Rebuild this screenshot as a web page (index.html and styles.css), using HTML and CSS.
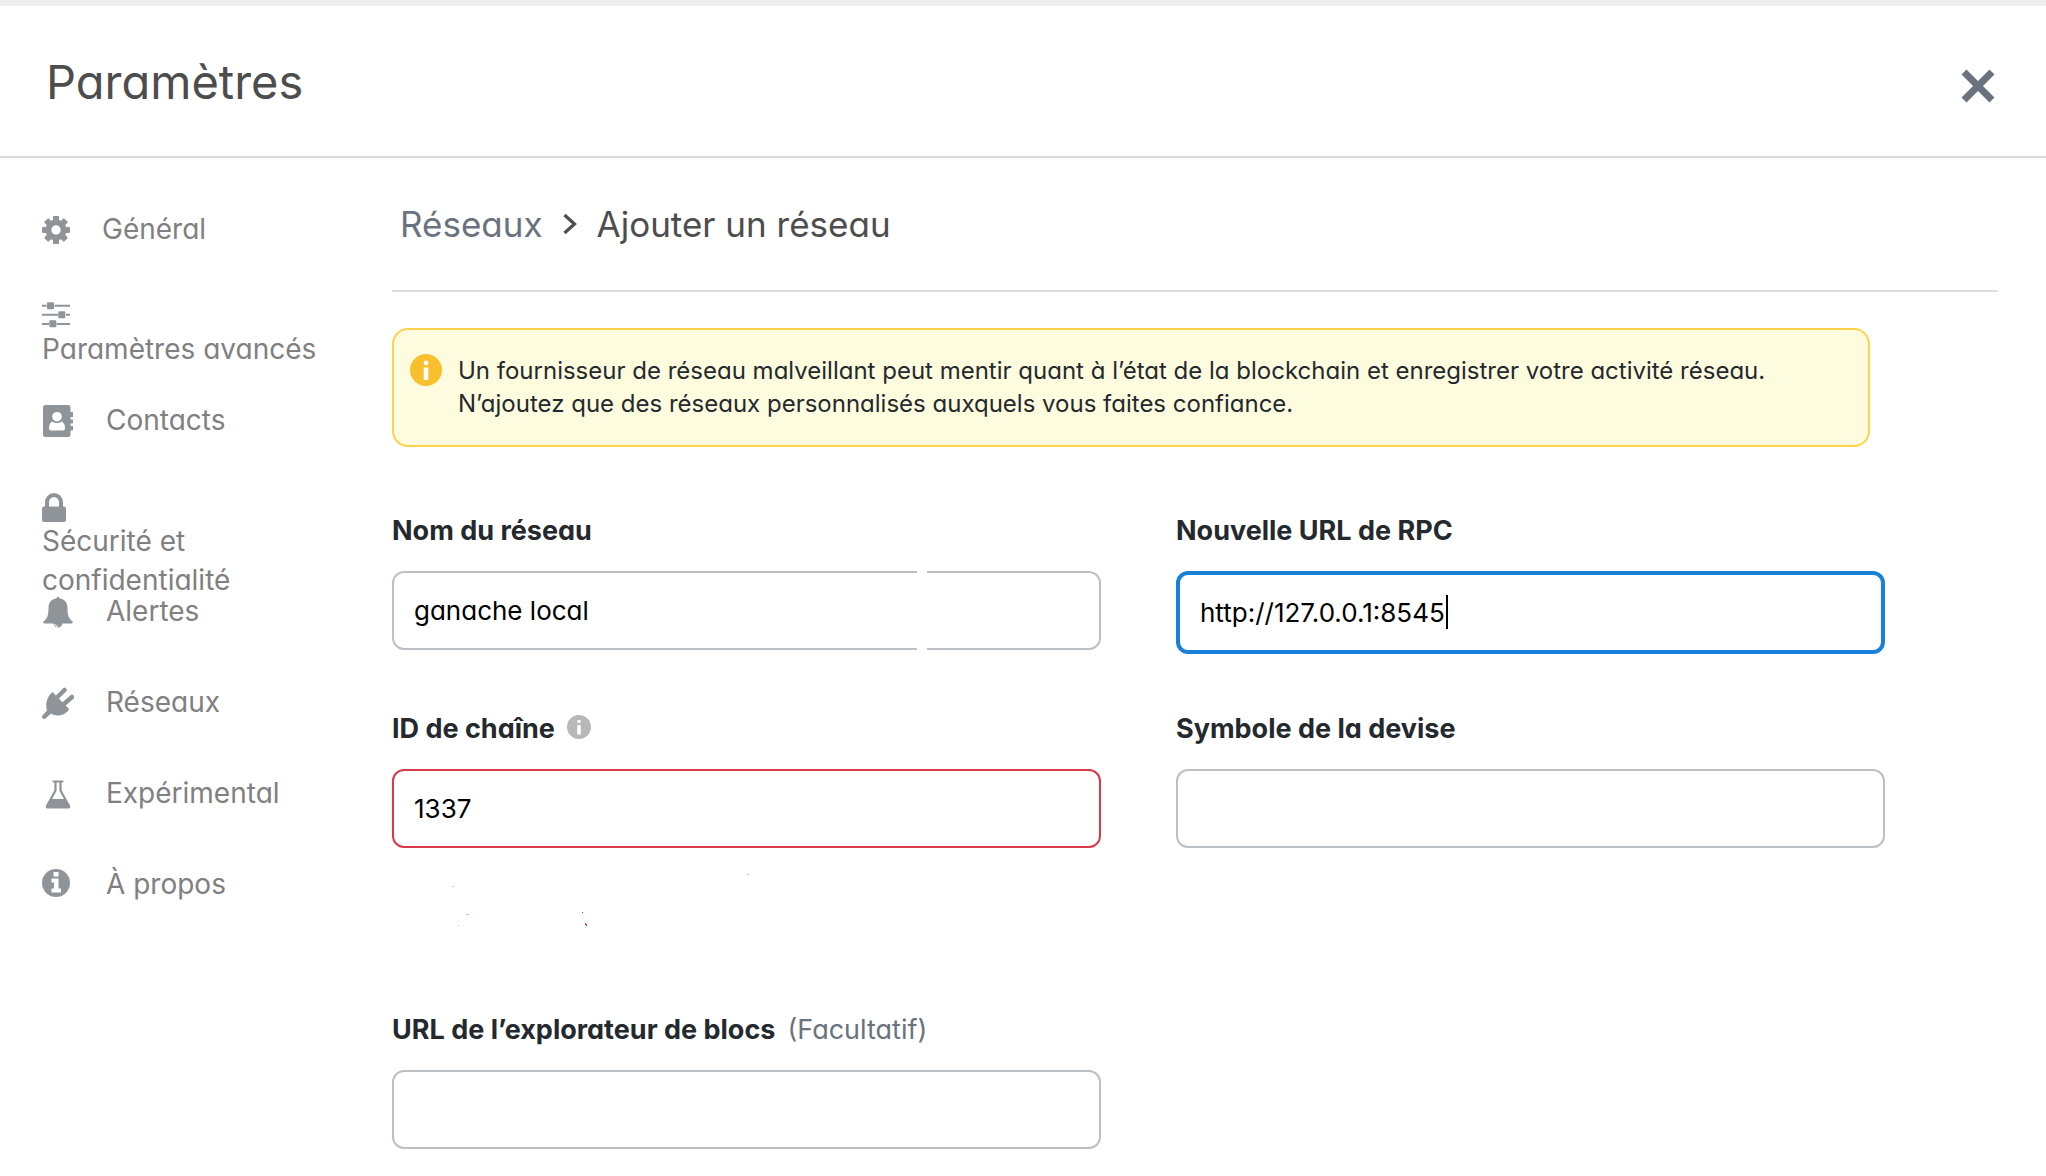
FILE: index.html
```html
<!DOCTYPE html>
<html lang="fr">
<head>
<meta charset="utf-8">
<meta name="viewport" content="width=device-width, initial-scale=1">
<title>Paramètres</title>
<link rel="stylesheet" href="styles.css">
</head>
<body>
<header class="header">
  <h1 class="header-title">Paramètres</h1>
  <button class="close" type="button" aria-label="Fermer">
    <svg width="34" height="34" viewBox="0 0 34 34"><path d="M5.500 5.500 28.500 28.500M28.500 5.500 5.500 28.500" stroke="currentColor" stroke-width="7" stroke-linecap="square" fill="none"/></svg>
  </button>
</header>
<div class="layout">
  <nav class="tabs">
    <a class="tab" href="#general">
      <svg class="icon" width="28" height="28" viewBox="0 0 28 28"><g fill="currentColor"><rect x="11" y="0" width="6" height="28" rx="1"/><rect x="0" y="11" width="28" height="6" rx="1"/><rect x="11" y="0" width="6" height="28" rx="1" transform="rotate(45 14 14)"/><rect x="11" y="0" width="6" height="28" rx="1" transform="rotate(-45 14 14)"/><circle cx="14" cy="14" r="10.500"/></g><circle cx="14" cy="14" r="4.700" fill="#fff"/></svg>
      <span>Général</span>
    </a>
    <a class="tab tab-stacked" href="#avance">
      <svg class="icon" width="28" height="28" viewBox="0 0 28 28" fill="currentColor"><path d="M0 2.700h4.500v2H0zM12.500 2.700H28v2H12.500zM0 11.700h16v2H0zM24 11.700h4v2h-4zM0 20.900h7v2H0zM14.500 20.900H28v2H14.500z"/><rect x="5" y="0.200" width="7" height="7" rx="1"/><rect x="16.300" y="9.200" width="7" height="7" rx="1"/><rect x="7.300" y="18.300" width="7" height="7" rx="1"/></svg>
      <span>Paramètres avancés</span>
    </a>
    <a class="tab" href="#contacts">
      <svg class="icon" width="32" height="32" viewBox="0 0 32 32"><path fill="currentColor" d="M3.500 0H26q2.500 0 2.500 2.500V7H31v5h-2.500v2.500H31v4h-2.500V21H31v4.500h-2.500v4Q28.500 32 26 32H3.500Q1 32 1 29.500v-27Q1 0 3.500 0z"/><g fill="#fff"><circle cx="15" cy="11.700" r="4.800"/><path d="M10 16.500q5 3 10 0 3 2 3 6.500 0 2.500-2 2.500H9q-2 0-2-2.500 0-4.500 3-6.500z"/></g></svg>
      <span>Contacts</span>
    </a>
    <a class="tab tab-stacked" href="#securite">
      <svg class="icon" width="28" height="29" viewBox="0 0 28 29"><rect x="0" y="13.500" width="24" height="15.500" rx="2" fill="currentColor"/><path d="M5 15V9.500a7 7.500 0 0 1 14 0V15" fill="none" stroke="currentColor" stroke-width="4"/></svg>
      <span>Sécurité et confidentialité</span>
    </a>
    <a class="tab" href="#alertes">
      <svg class="icon" width="32" height="32" viewBox="0 0 32 32"><path fill="currentColor" d="M14.500 2.500q0-1.700 1.500-1.700t1.500 1.700C23 3 25.500 7 25.500 12c0 8 1.500 10.500 5 13.500.7 1.200 0 2-1 2H20.500Q19.500 31.500 16 31.500T11.500 27.500H2.500c-1 0-1.700-.8-1-2 3.500-3 5-5.500 5-13.500 0-5 2.500-9 8-9.500z"/><path d="M13 28q.4 2.500 3 2.500" stroke="#fff" stroke-width="1" fill="none"/></svg>
      <span>Alertes</span>
    </a>
    <a class="tab" href="#reseaux">
      <svg class="icon" width="32" height="32" viewBox="0 0 32 32"><path fill="currentColor" d="M10.500 5 27 22 26 24C21 29.500 13 29.500 9 26.500L3.500 31.500Q0 33 0 29L5 23.500C3 18 5 10 9.500 6z"/><path d="M15.500 10 22.500 3M22 17 30 10" stroke="currentColor" stroke-width="4.500" stroke-linecap="round"/></svg>
      <span>Réseaux</span>
    </a>
    <a class="tab" href="#experimental">
      <svg class="icon" width="32" height="32" viewBox="0 0 32 32"><path d="M11.500 3.500h9M13.500 3.500v9L5 28q-.6 1.500 1 1.500h20q1.600 0 1-1.500l-8.500-15.500v-9" fill="none" stroke="currentColor" stroke-width="2.200" stroke-linecap="round"/><path d="M9 21h14l5 7.500q0 1-1 1H5q-1 0-1-1z" fill="currentColor"/></svg>
      <span>Expérimental</span>
    </a>
    <a class="tab" href="#apropos">
      <svg class="icon" width="32" height="32" viewBox="0 0 32 32"><circle cx="14" cy="14" r="14" fill="currentColor"/><path d="M11.500 3h5v4.500h-5zM9.500 9.500h7v10H19v4H9.500v-4h2.500v-6H9.500z" fill="#fff"/></svg>
      <span>À propos</span>
    </a>
  </nav>
  <main class="content">
    <nav class="crumbs">
      <a class="crumb-link" href="#reseaux">Réseaux</a>
      <svg width="14" height="22" viewBox="0 0 14 22"><path d="M1.500 2 11.500 11 1.500 20" fill="none" stroke="currentColor" stroke-width="3.200"/></svg>
      <h2 class="crumb-current">Ajouter un réseau</h2>
    </nav>
    <form class="form">
      <div class="alert" role="note">
        <svg width="32" height="32" viewBox="0 0 32 32"><circle cx="16" cy="16" r="16" fill="#f8c02c"/><circle cx="16" cy="9" r="2.400" fill="#fff"/><path d="M13.700 13.500h4.600V26h-4.600z" fill="#fff"/></svg>
        <p class="alert-text">Un fournisseur de réseau malveillant peut mentir quant à l’état de la blockchain et enregistrer votre activité réseau. N’ajoutez que des réseaux personnalisés auxquels vous faites confiance.</p>
      </div>
      <div class="fields">
        <div class="field">
          <div class="label-row"><label for="name">Nom du réseau</label></div>
          <div class="control split"><input class="input" id="name" type="text" value="ganache local"></div>
        </div>
        <div class="field">
          <div class="label-row"><label for="rpc">Nouvelle URL de RPC</label></div>
          <div class="control"><input class="input input-active" id="rpc" type="text" value="http://127.0.0.1:8545"><span class="caret"></span></div>
        </div>
        <div class="field">
          <div class="label-row">
            <label for="chain">ID de chaîne</label>
            <svg class="hint" width="24" height="24" viewBox="0 0 24 24"><circle cx="12" cy="12" r="12" fill="#b8b8b8"/><circle cx="12" cy="6.500" r="1.800" fill="#fff"/><path d="M10.200 10h3.600v9.500h-3.600z" fill="#fff"/></svg>
          </div>
          <div class="control"><input class="input input-error" id="chain" type="text" value="1337"></div>
          <svg class="message" viewBox="0 0 709 107"><g fill="#d73847"><path d="M190 64h1v1h-1zM193 75h1v1h1v2h-1v-1h-1z"/><g opacity=".4"><path d="M60 38h2v1h-2zM355 26h2v1h-2zM74 66h3v1h-3zM66 77h1v1h-1z"/></g></g></svg>
        </div>
        <div class="field">
          <div class="label-row"><label for="symbol">Symbole de la devise</label></div>
          <div class="control"><input class="input" id="symbol" type="text"></div>
        </div>
        <div class="field">
          <div class="label-row"><label for="explorer">URL de l’explorateur de blocs</label><span class="optional">(Facultatif)</span></div>
          <div class="control"><input class="input" id="explorer" type="text"></div>
        </div>
      </div>
    </form>
  </main>
</div>
</body>
</html>
```
FILE: styles.css
```css
* { box-sizing: border-box; }

body {
  margin: 0;
  border-top: 6px solid #ebedef;
  background: #fff;
  color: #24292e;
  font-family: Inter, "Liberation Sans", sans-serif;
  font-feature-settings: "cv11";
  overflow: hidden;
}

h1, h2, p { margin: 0; font-weight: 400; }
a { text-decoration: none; }
svg { display: block; flex: none; }

.header {
  display: flex;
  align-items: center;
  justify-content: space-between;
  height: 152px;
  padding: 2px 51px 0 46px;
  border-bottom: 2px solid #d8d8d8;
}
.header-title { font-size: 47px; line-height: 60px; color: #4d4d4d; }
.close {
  padding: 8px 0 0;
  border: 0;
  background: none;
  color: #6a737d;
}

.layout { display: grid; grid-template-columns: 392px 1fr; }

.tabs { padding: 26px 60px 0 42px; }
.tab {
  display: flex;
  align-items: center;
  gap: 32px;
  height: 91px;
  color: #808080;
  font-size: 28px;
  line-height: 39px;
}
.tab-stacked { display: block; height: 100px; padding-top: 27px; }
.icon { color: #8f9498; }

.content { padding-right: 48px; }
.crumbs {
  display: flex;
  align-items: center;
  gap: 20px;
  height: 134px;
  padding: 0 8px;
  border-bottom: 2px solid #dedede;
  color: #4d4d4d;
  font-size: 35px;
  line-height: 44px;
}
.crumb-link { color: #6a737d; }
.crumb-current { font-size: 35px; }

.form { max-width: 1493px; padding-top: 36px; }
.alert {
  display: flex;
  gap: 16px;
  margin-right: 15px;
  padding: 24px 16px;
  border: 2px solid #ffd14d;
  border-radius: 16px;
  background: #fefcde;
}
.alert-text {
  max-width: 1340px;
  padding-bottom: 1px;
  font-size: 24px;
  line-height: 33px;
}

.fields {
  display: grid;
  grid-template-columns: 1fr 1fr;
  gap: 55px 75px;
  padding-top: 64px;
}
.label-row {
  display: flex;
  align-items: center;
  gap: 12px;
  height: 40px;
  margin-bottom: 20px;
  font-size: 27px;
  line-height: 40px;
}
.label-row label { font-weight: 700; }
.hint { margin-bottom: 4px; }
.optional { color: #6a737d; }

.control { position: relative; }
.input {
  display: block;
  width: 100%;
  height: 79px;
  padding: 0 20px;
  border: 2px solid #bbc0c5;
  border-radius: 12px;
  background: #fff;
  color: #000;
  font: inherit;
  font-size: 26px;
  outline: 0;
}
.input-active { height: 83px; border: 4px solid #1880d8; }
.input-error { border-color: #d73a49; }

/* Break in the frame of the name field */
.split::after {
  content: "";
  position: absolute;
  top: 0;
  bottom: 0;
  left: 525px;
  width: 10px;
  background: #fff;
}
.caret {
  position: absolute;
  top: 24px;
  left: 270px;
  width: 2px;
  height: 34px;
  background: #000;
}
.message { width: 100%; height: 107px; }
```
